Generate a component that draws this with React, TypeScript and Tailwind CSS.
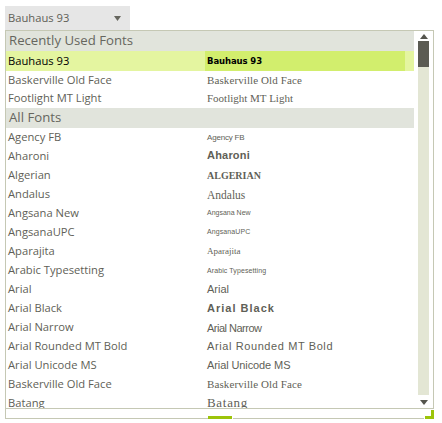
const ui = "font-['Open_Sans',sans-serif]";

const recent = [
  { name: "Bauhaus 93", preview: "font-['DejaVu_Sans',sans-serif] text-[8.5px] font-black tracking-[-0.1px]", selected: true, height: "h-[20px]" },
  { name: "Baskerville Old Face", preview: "font-['Liberation_Serif',serif] text-[11px] tracking-[0.1px]", height: "h-[18px]" },
  { name: "Footlight MT Light", preview: "font-['Liberation_Serif',serif] text-[11px]", height: "h-[19px]" },
];

const fonts = [
  { name: "Agency FB", preview: "font-['Liberation_Sans',sans-serif] text-[8px] tracking-[-0.2px]" },
  { name: "Aharoni", preview: "font-['Liberation_Sans',sans-serif] text-[11px] font-bold tracking-[0.2px] pb-[2px]" },
  { name: "Algerian", preview: "font-['Liberation_Serif',serif] text-[10px] font-bold uppercase" },
  { name: "Andalus", preview: "font-['Liberation_Serif',serif] text-[11.5px] pt-[2px]" },
  { name: "Angsana New", preview: "font-['Liberation_Sans',sans-serif] text-[7px]" },
  { name: "AngsanaUPC", preview: "font-['Liberation_Sans',sans-serif] text-[7px] tracking-[0.1px]" },
  { name: "Aparajita", preview: "font-['Liberation_Serif',serif] text-[9px]" },
  { name: "Arabic Typesetting", preview: "font-['Liberation_Sans',sans-serif] text-[7px] tracking-[0.1px] pt-[2px]" },
  { name: "Arial", preview: "font-['Liberation_Sans',sans-serif] text-[11px]" },
  { name: "Arial Black", preview: "font-['Liberation_Sans',sans-serif] text-[11px] font-bold tracking-[1px]" },
  { name: "Arial Narrow", preview: "font-['Liberation_Sans',sans-serif] text-[11px] tracking-[-0.5px] pt-[1px]" },
  { name: "Arial Rounded MT Bold", preview: "font-['Liberation_Sans',sans-serif] text-[11px] tracking-[0.6px] pb-[1px]" },
  { name: "Arial Unicode MS", preview: "font-['Liberation_Sans',sans-serif] text-[11px] tracking-[-0.1px]" },
  { name: "Baskerville Old Face", preview: "font-['Liberation_Serif',serif] text-[11px] tracking-[0.1px]" },
  { name: "Batang", preview: "font-['Liberation_Serif',serif] text-[13px] tracking-[0.7px] pb-[2px]" },
];

function GroupHeader({ title }: { title: string }) {
  return (
    <div className="flex h-[20px] w-[408px] items-center bg-[#e1e4dc] pl-[3px] text-[13.2px] text-[#66665e]">
      {title}
    </div>
  );
}

function FontRow({ name, preview, selected, height }: { name: string; preview: string; selected?: boolean; height?: string }) {
  return (
    <div
      className={`flex w-[408px] shrink-0 items-center text-[11.2px] ${height ?? "h-[19px]"} ${
        selected ? "bg-[#e4f5a0] text-black" : "text-[#5f5f57]"
      }`}
    >
      <span className="w-[199px] shrink-0 pl-[2px]">{name}</span>
      <span
        className={`flex h-full w-[200px] items-center pl-[2px] ${selected ? "bg-[#d2ee6d]" : ""}`}
      >
        <span className={`whitespace-nowrap ${preview}`}>{name}</span>
      </span>
    </div>
  );
}

function Scrollbar() {
  return (
    <div className="flex w-[19px] flex-col items-center bg-white">
      <svg width="8" height="5" viewBox="0 0 8 5" className="mt-[3px] shrink-0">
        <path d="M4 0 L8 5 H0 Z" fill="#55554e" />
      </svg>
      <div className="mt-[2px] h-[354px] w-[11px] bg-[#e3e6d4]">
        <div className="h-[26px] w-[11px] bg-[#5b5b53]" />
      </div>
      <svg width="8" height="5" viewBox="0 0 8 5" className="mt-[5px] shrink-0">
        <path d="M0 0 H8 L4 5 Z" fill="#55554e" />
      </svg>
    </div>
  );
}

export default function App() {
  return (
    <div className={`h-[423px] w-[442px] overflow-hidden bg-white pl-[5px] pt-[6px] ${ui}`}>
      <div className="flex h-[24px] w-[125px] items-center justify-between bg-[#e6e6e6] pl-[3px] pr-[9px] text-[11.2px] text-[#5f5f57]">
        <span>Bauhaus 93</span>
        <svg width="7" height="5" viewBox="0 0 7 5">
          <path d="M0 0 H7 L3.5 5 Z" fill="#66665e" />
        </svg>
      </div>
      <div className="flex h-[379px] w-[429px] border border-[#c5c8b4]">
        <div className="h-full w-[408px] overflow-hidden">
          <GroupHeader title="Recently Used Fonts" />
          {recent.map((f) => (
            <FontRow key={f.name} {...f} />
          ))}
          <GroupHeader title="All Fonts" />
          {fonts.map((f) => (
            <FontRow key={f.name} {...f} />
          ))}
        </div>
        <div className="ml-auto">
          <Scrollbar />
        </div>
      </div>
      <div className="flex h-[10px] w-[429px] items-end border-l border-[#c5c8b4]">
        <div className="h-px w-[202px] bg-[#c5c8b4]" />
        <div className="h-[3px] w-[24px] bg-[#9cc40a]" />
        <div className="ml-px h-px w-[191px] bg-[#c5c8b4]" />
        <svg width="9" height="9" viewBox="0 0 9 9" className="ml-auto shrink-0">
          <path d="M6 0 H9 V9 H0 V6 H6 Z" fill="#9cc40a" />
        </svg>
      </div>
    </div>
  );
}
